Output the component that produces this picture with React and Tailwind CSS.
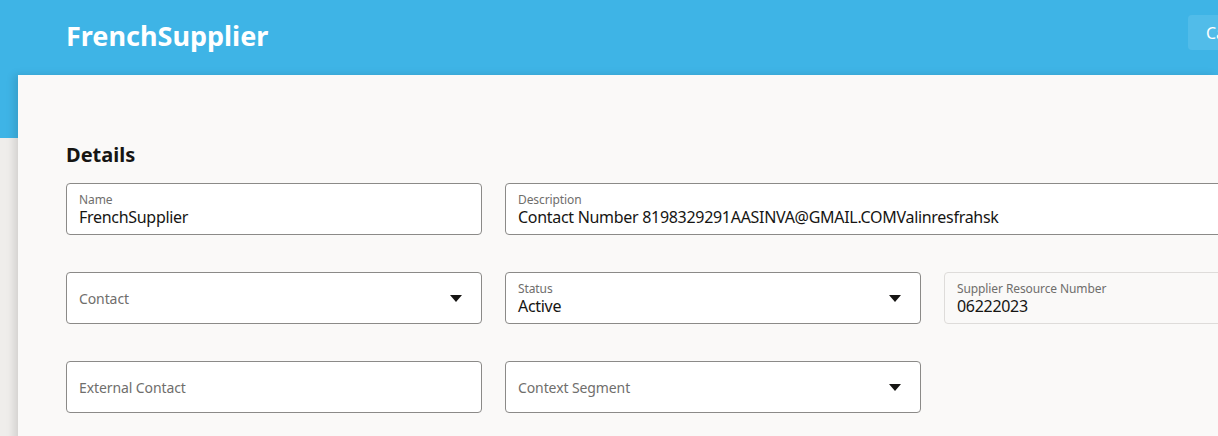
import React from "react";

const Caret = () => (
  <svg width="12" height="7" viewBox="0 0 12 7" className="shrink-0">
    <path d="M0 0h12L6 7z" fill="#161513" />
  </svg>
);

// field with a floating label and a value
const Field = ({ label, value, wide, select, readOnly }) => (
  <div
    className={`h-[52px] rounded-[4px] border flex items-center pl-3 pr-[19px] ${
      wide ? "col-span-2" : ""
    } ${readOnly ? "border-[#dedcda] bg-[#faf9f8]" : "border-[#8b8a88] bg-white"}`}
  >
    <div className="flex-1 min-w-0 whitespace-nowrap">
      {value ? (
        <div className="pt-[2px]">
          <div className="text-[12px] leading-[14px] text-[#6f6e6c] tracking-[-0.1px]">{label}</div>
          <div className="text-[16px] leading-[20px] text-[#161513] tracking-[-0.3px]">{value}</div>
        </div>
      ) : (
        <div className="text-[14px] leading-[18px] text-[#6f6e6c] mt-[1px] tracking-[-0.1px]">{label}</div>
      )}
    </div>
    {select && <Caret />}
  </div>
);

export default function App() {
  return (
    <div
      className="w-[1218px] h-[436px] overflow-hidden bg-[#efedeb]"
      style={{ fontFamily: '"Noto Sans", "Open Sans", sans-serif' }}
    >
      <div className="h-[138px] bg-[#3eb4e6] flex items-start justify-between pl-[66px]">
        <h1 className="text-[27px] leading-[72px] font-bold text-white">FrenchSupplier</h1>
        <button className="mt-[15px] h-[35px] w-[80px] rounded-[4px] bg-white/10 text-white text-[16px] text-left pl-[18px] -mr-[50px]">
          Cancel
        </button>
      </div>
      <div className="-mt-[63px] ml-[18px] h-[400px] bg-[#faf9f8] shadow-[-4px_0_8px_rgba(0,0,0,0.12)] pl-[48px] pt-[66px]">
        <h2 className="text-[20px] leading-[28px] font-bold text-[#161513] mb-[14px]">Details</h2>
        <div className="grid grid-cols-[415.5px_415.5px_415.5px] gap-x-[23.5px] gap-y-[37px]">
          <Field label="Name" value="FrenchSupplier" />
          <Field
            label="Description"
            value="Contact Number 8198329291AASINVA@GMAIL.COMValinresfrahsk"
            wide
          />
          <Field label="Contact" select />
          <Field label="Status" value="Active" select />
          <Field label="Supplier Resource Number" value="06222023" readOnly />
          <Field label="External Contact" />
          <Field label="Context Segment" select />
        </div>
      </div>
    </div>
  );
}
